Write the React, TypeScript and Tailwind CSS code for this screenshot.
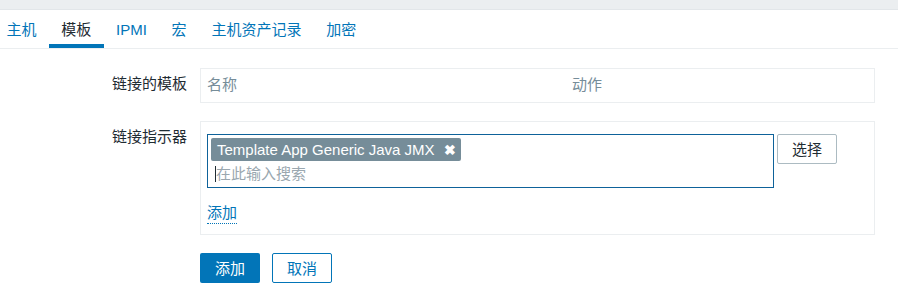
import React from "react";

const tabs = [
  { name: "主机", active: false },
  { name: "模板", active: true },
  { name: "IPMI", active: false },
  { name: "宏", active: false },
  { name: "主机资产记录", active: false },
  { name: "加密", active: false },
];

export default function App() {
  return (
    <div
      className="w-[898px] h-[302px] bg-white text-[15px] text-[#1f2c33] overflow-hidden"
      style={{ fontFamily: '"Liberation Sans", "Noto Sans CJK SC", sans-serif' }}
    >
      {/* top strip */}
      <div className="h-[10px] bg-[#ebeef0] border-b border-[#e2e6e9]" />

      {/* tabs */}
      <div className="h-[39px] border-b border-[#ebeef0] flex items-stretch -ml-[6px]">
        {tabs.map((t) => (
          <div
            key={t.name}
            className={`relative px-[12.4px] flex items-center leading-none ${
              t.active ? "text-[#1f2c33]" : "text-[#0275b8]"
            }`}
          >
            {t.name}
            {t.active && <span className="absolute left-0 right-0 bottom-0 h-[4px] bg-[#0275b8]" />}
          </div>
        ))}
      </div>

      {/* form */}
      <div className="pt-[19px] flex flex-col gap-[18px]">
        {/* linked templates */}
        <div className="flex">
          <div className="w-[187px] text-right pt-[6px] leading-[20px]">链接的模板</div>
          <div className="ml-[13px] w-[675px] h-[35px] border border-[#ebeef0] flex items-center px-[6px] text-[#768d99]">
            <div className="w-[365px]">名称</div>
            <div>动作</div>
          </div>
        </div>

        {/* link indicators */}
        <div className="flex">
          <div className="w-[187px] text-right pt-[6px] leading-[20px]">链接指示器</div>
          <div className="ml-[13px] w-[675px] h-[114px] border border-[#ebeef0] px-[6px] pt-[12px]">
            <div className="flex items-start gap-[3px]">
              <div className="w-[567px] h-[54px] border border-[#0e629a] p-[3px]">
                <div className="inline-flex items-center h-[23px] bg-[#768d99] text-white rounded-[2px] pl-[6px] pr-[5px] leading-none">
                  Template App Generic Java JMX
                  <span className="ml-[9px] font-bold text-[14px]">✖</span>
                </div>
                <div className="flex items-center h-[24px] pl-[4px]">
                  <span className="w-px h-[16px] bg-[#1f2c33]" />
                  <span className="text-[#9aa7af] leading-none">在此输入搜索</span>
                </div>
              </div>
              <button className="w-[60px] h-[30px] border border-[#acbbc2] rounded-[2px] bg-white text-[#1f2c33] leading-none">
                选择
              </button>
            </div>
            <div className="mt-[14px]">
              <span className="text-[#0275b8] border-b border-dotted border-[#0275b8] pb-[2px] leading-[20px]">
                添加
              </span>
            </div>
          </div>
        </div>

        {/* buttons */}
        <div className="flex gap-3 ml-[200px]">
          <button className="w-[60px] h-[30px] bg-[#0275b8] text-white rounded-[2px] leading-none">添加</button>
          <button className="w-[60px] h-[30px] border border-[#0275b8] text-[#0275b8] bg-white rounded-[2px] leading-none">
            取消
          </button>
        </div>
      </div>
    </div>
  );
}
